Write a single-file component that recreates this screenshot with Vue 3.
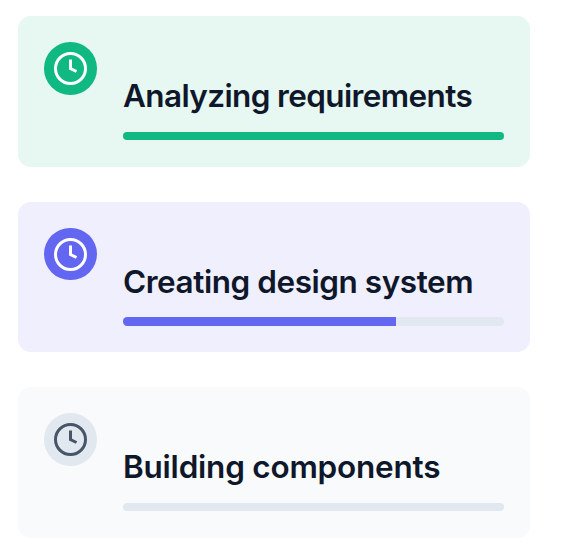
<script setup>
const steps = [
  { title: 'Analyzing requirements', state: 'done', progress: 100 },
  { title: 'Creating design system', state: 'active', progress: 71.6 },
  { title: 'Building components', state: 'pending', progress: 0 },
]
</script>

<template>
  <main class="steps">
    <section v-for="step in steps" :key="step.title" class="card" :class="step.state">
      <div class="badge">
        <svg class="clock" viewBox="-0.33 -0.33 24.66 24.66" fill="none" stroke="currentColor" stroke-width="2">
          <circle cx="12" cy="12" r="10" />
          <path d="M12 6v6l4 2" />
        </svg>
      </div>
      <div class="body">
        <h3 class="title">{{ step.title }}</h3>
        <div class="track"><div class="fill" :style="{ width: step.progress + '%' }"></div></div>
      </div>
    </section>
  </main>
</template>

<style>
body { margin: 0; background: #fff; }
</style>

<style scoped>
.steps { display: flex; flex-direction: column; gap: 35px; padding: 16.1px 37px 20px 18px; }
.card { box-sizing: border-box; height: 150.6px; display: flex; gap: 26.3px; padding: 26.1px; border-radius: 13px; }
.badge { width: 52.6px; height: 52.6px; flex: none; border-radius: 50%; display: flex; align-items: center; justify-content: center; color: #fff; }
.clock { width: 37px; height: 37px; flex: none; }
.body { flex: 1; min-width: 0; padding-top: 34px; }
.title { margin: 0; height: 40px; line-height: 40px; white-space: nowrap; font-family: Inter, sans-serif; font-size: 31.5px; font-weight: 600; color: #0f172a; }
.track { height: 8.3px; margin-top: 15.6px; border-radius: 4.2px; overflow: hidden; background: #e2e8f0; }
.fill { height: 100%; }
.done { background: #e7f7f1; }
.done .title { letter-spacing: -0.62px; }
.done .badge, .done .fill { background: #10b981; }
.active { background: #f0effe; }
.active .title { letter-spacing: -0.45px; }
.active .badge, .active .fill { background: #6366f1; }
.pending { background: #f8fafc; }
.pending .title { letter-spacing: -0.22px; }
.pending .badge { background: #e2e8f0; color: #475569; }
</style>
